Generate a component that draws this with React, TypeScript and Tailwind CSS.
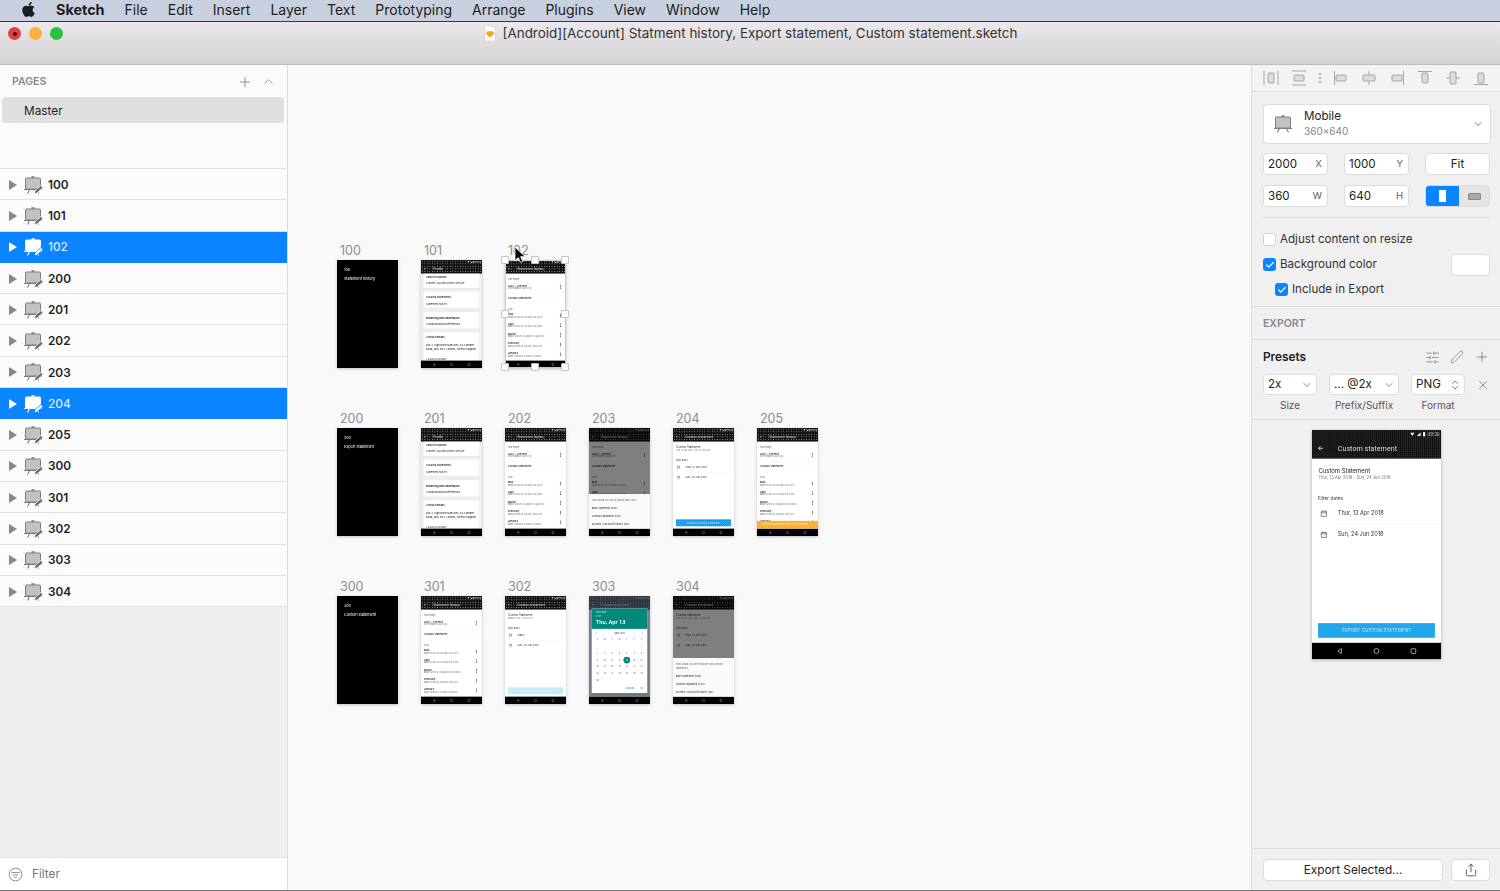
import React from 'react'
import { ChevronDown, ChevronUp, ChevronsUpDown, ChevronLeft, ChevronRight, Check, Pen, Plus, Share, SlidersHorizontal, X } from 'lucide-react'
import { FaApple } from 'react-icons/fa'

const menus = ['File', 'Edit', 'Insert', 'Layer', 'Text', 'Prototyping', 'Arrange', 'Plugins', 'View', 'Window', 'Help']
const pages = ['100', '101', '102', '200', '201', '202', '203', '204', '205', '300', '301', '302', '303', '304']

const Easel = ({ active = false, pencil = true, className = '' }: { active?: boolean; pencil?: boolean; className?: string }) => {
  const line = active ? '#ffffff' : '#7d7d7d'
  return (
    <svg viewBox="0 0 20 18" className={className}>
      <path d="M8.5 1h3" stroke={line} strokeWidth="1.6" />
      <rect x="2.5" y="2" width="15" height="11" rx="1" fill={active ? '#ffffff' : '#c2c2c2'} stroke={line} />
      <path d="M1 13.5h18M6.5 13.5l-2 4M13.5 13.5l2 4" stroke={line} strokeWidth="1.1" fill="none" />
      {pencil && <path d="M11 18l1.2-3.2 5.8-5.3 2 2-5.8 5.3z" fill={active ? '#ffffff' : '#666666'} stroke={active ? '#0a84ff' : '#fbfbfb'} strokeWidth="0.8" />}
    </svg>
  )
}

const Sidebar = () => (
  <aside className="w-[288px] shrink-0 flex flex-col bg-[#efefef] border-r border-[#dcdcdc]">
    <div className="h-[104px] shrink-0 bg-[#fbfbfb] border-b border-[#e2e2e2] flex flex-col px-[2px]">
      <div className="h-[32px] flex items-center justify-between pt-[1px] pl-[10px] pr-[9px]">
        <span className="text-[10.5px] font-semibold text-[#8a8a8a]">PAGES</span>
        <div className="flex items-center gap-[8px] text-[#7c7c7c]">
          <Plus size={16} strokeWidth={1.2} />
          <ChevronUp size={15} strokeWidth={1.2} />
        </div>
      </div>
      <div className="h-[26px] w-[282px] rounded-[4px] bg-[#dfdfdf] flex items-center pl-[22px] pt-[4px] text-[11.8px] text-[#222]">Master</div>
    </div>
    <div className="flex-1 flex flex-col">
      {pages.map(p => {
        const active = p === '102' || p === '204'
        return (
          <div key={p} className={`h-[31.3px] flex items-center pt-[1px] border-b ${active ? 'bg-[#0a84ff] border-[#0a84ff]' : 'border-[#e2e2e2] bg-[#fbfbfb]'}`}>
            <svg viewBox="0 0 8 10" className="w-[8px] h-[10px] ml-[9px]">
              <path d="M0 0l8 5-8 5z" fill={active ? '#ffffff' : '#85898f'} />
            </svg>
            <Easel active={active} className="w-[20px] h-[18px] ml-[6px]" />
            <span className={`ml-[5px] pt-[2px] text-[11.8px] ${active ? 'text-[#dcedff] font-medium' : 'text-[#1e1e1e] font-semibold'}`}>{p}</span>
          </div>
        )
      })}
    </div>
    <div className="h-[33px] shrink-0 bg-white border-t border-[#e2e2e2] flex items-center pl-[8px] gap-[9px]">
      <svg viewBox="0 0 16 16" className="w-[15px] h-[15px]">
        <circle cx="8" cy="8" r="6.8" fill="none" stroke="#8a8a8a" />
        <path d="M3.5 6h9M5 8.5h6M6.5 11h3" stroke="#8a8a8a" />
      </svg>
      <span className="pt-[2px] text-[11.8px] text-[#777]">Filter</span>
    </div>
  </aside>
)

// ---- mini android screens, drawn at 360x640 and scaled down ----

const Dots = ({ fine, children, className = '' }: { fine: boolean; children: React.ReactNode; className?: string }) => (
  <div className={`bg-[#101010] ${fine
    ? 'bg-[radial-gradient(circle,#a4a8ae_1.3px,transparent_1.6px)] bg-[length:5.6px_5.6px]'
    : 'bg-[radial-gradient(circle,#a2a6ad_3.5px,transparent_4px)] bg-[length:15px_15px]'} ${className}`}>{children}</div>
)

const Header = ({ title, fine }: { title: string; fine: boolean }) => (
  <Dots fine={fine} className="h-[80px] shrink-0 flex flex-col border-b-[2px] border-[#5d6b7a]">
    <div className="h-[24px] flex items-center justify-end gap-[6px] pr-[4px] text-white">
      <svg viewBox="0 0 44 14" className="w-[44px] h-[14px]">
        <path d="M1 3h12l-6 8z" fill="#fff" />
        <path d="M20 12l10-10v10z" fill="#fff" />
        <rect x="37" y="1" width="6" height="12" fill="#fff" />
      </svg>
      <span className="text-[12px] text-[#ddd]">09:30</span>
    </div>
    <div className="flex-1 flex items-center pl-[16px] text-[#d8dade]">
      <svg viewBox="0 0 16 16" className="w-[16px] h-[16px]">
        <path d="M15 8H2M8 2L2 8l6 6" stroke="#fff" strokeWidth="2" fill="none" />
      </svg>
      <span className="ml-[40px] text-[20px]" style={{ fontFamily: 'Roboto, sans-serif' }}>{title}</span>
    </div>
  </Dots>
)

const Nav = () => (
  <div className="h-[46px] shrink-0 bg-black flex items-center justify-around px-[26px]">
    <svg viewBox="0 0 20 20" className="w-[20px] h-[20px]"><path d="M15 3L5 10l10 7z" fill="none" stroke="#d8d8d8" strokeWidth="2" /></svg>
    <svg viewBox="0 0 20 20" className="w-[20px] h-[20px]"><circle cx="10" cy="10" r="7" fill="none" stroke="#d8d8d8" strokeWidth="2" /></svg>
    <svg viewBox="0 0 20 20" className="w-[20px] h-[20px]"><rect x="3.5" y="3.5" width="13" height="13" rx="1.5" fill="none" stroke="#d8d8d8" strokeWidth="2" /></svg>
  </div>
)

const Black = ({ num, title }: { num: string; title: string }) => (
  <div className="h-full bg-black text-white pl-[41px] pt-[42px] flex flex-col gap-[22px] text-[22px]">
    <span>{num}</span>
    <span>{title}</span>
  </div>
)

const Kebab = () => (
  <div className="flex flex-col gap-[2px] shrink-0">
    <span className="w-[6px] h-[6px] rounded-full bg-[#333]" />
    <span className="w-[6px] h-[6px] rounded-full bg-[#333]" />
    <span className="w-[6px] h-[6px] rounded-full bg-[#333]" />
  </div>
)

const Month = ({ name, sub }: { name: string; sub: string }) => (
  <div className="h-[57.5px] shrink-0 flex items-center justify-between pl-[16px] pr-[30px]">
    <div className="flex flex-col">
      <span className="text-[16px] leading-[20px] font-medium text-[#111]">{name}</span>
      <span className="text-[11px] leading-[14px] text-[#666]">{sub}</span>
    </div>
    <Kebab />
  </div>
)

const History = ({ fine = false, banner = false }: { fine?: boolean; banner?: boolean }) => (
  <div className="relative h-full flex flex-col bg-white">
    <Header title="Statement history" fine={fine} />
    <div className="flex-1 overflow-hidden flex flex-col">
      <div className="pl-[16px] pt-[24px] text-[13px] leading-[18px] text-[#555]">This month</div>
      <div className="h-[78px] shrink-0 flex items-center justify-between pl-[16px] pr-[30px] border-b border-[#e8e8e8] -mt-[2px]">
        <div className="flex flex-col">
          <span className="text-[16px] leading-[20px] font-medium text-[#111]">Jun 1 - Present</span>
          <span className="text-[11px] leading-[14px] text-[#666]">Current balance: £3412.50</span>
        </div>
        <Kebab />
      </div>
      <div className="h-[54px] shrink-0 flex items-center pl-[16px] text-[16px] font-medium text-[#111] border-b border-[#e8e8e8]">Custom statement</div>
      <div className="pl-[16px] pt-[28px] text-[13px] leading-[18px] text-[#555]">2018</div>
      <Month name="May" sub="Balance £1482.50, in £3800, out £2320" />
      <Month name="April" sub="Balance £1002.50, in £3800, out £2150" />
      <Month name="March" sub="Balance £952.50, in £3800, out £3040.50" />
      <Month name="February" sub="Balance £1193.00, in £3800, out £2770" />
      <Month name="January" sub="Balance £963.00, in £3800, out £4010" />
    </div>
    {banner && (
      <div className="absolute left-0 right-0 bottom-[46px] h-[46px] bg-[#f9b13c] flex items-center pl-[24px] text-[13px] text-[#fdebc8]">
        Your file download will start in a few seconds
      </div>
    )}
    <Nav />
  </div>
)

const ProfileCard = ({ children }: { children: React.ReactNode }) => (
  <div className="mx-[14px] bg-white rounded-[2px] shadow-[0_1px_3px_#bbb] px-[16px] text-[15px] text-[#111] shrink-0">{children}</div>
)

const Profile = () => (
  <div className="h-full flex flex-col bg-[#eeeeee]">
    <Header title="Profile" fine={false} />
    <div className="flex-1 overflow-hidden flex flex-col gap-[20px]">
      <ProfileCard>
        <div className="h-[42px] flex items-center font-semibold">Switch to Monzo</div>
        <div className="h-[46px] flex items-start pt-[6px]">Current Account Switch Service</div>
      </ProfileCard>
      <ProfileCard>
        <div className="h-[50px] flex items-end pb-[5px] font-semibold">Account statements</div>
        <div className="h-[49px] flex items-start pt-[9px]">Statement history</div>
      </ProfileCard>
      <ProfileCard>
        <div className="h-[50px] flex items-end pb-[5px] font-semibold">Marketing and marketplace</div>
        <div className="h-[49px] flex items-start pt-[9px]">Communication preferences</div>
      </ProfileCard>
      <ProfileCard>
        <div className="h-[45px] flex items-end pb-[5px] font-semibold">Contact details</div>
        <div className="pt-[16px] pb-[14px] leading-[28px] border-b border-[#e8e8e8]">Flat 4, Highstone Mansions, 84 Camden Road, NW1 9DY, London, United Kingdom</div>
        <div className="h-[60px] pt-[18px]">+442072234567</div>
      </ProfileCard>
    </div>
    <Nav />
  </div>
)

const DateIcon = () => (
  <svg viewBox="0 0 20 20" className="w-[20px] h-[20px] shrink-0">
    <rect x="2.5" y="4" width="15" height="14" rx="1" fill="none" stroke="#555" strokeWidth="2" />
    <path d="M2.5 8h15M6 1.5V4M14 1.5V4" stroke="#555" strokeWidth="2" />
  </svg>
)

const CustomBody = ({ first, sub }: { first: string; sub: string }) => (
  <div className="flex-1 overflow-hidden flex flex-col">
    <div className="pl-[18px] pt-[22px] text-[16.5px] leading-[22px] text-[#222]">Custom Statement</div>
    <div className="pl-[18px] text-[11.5px] leading-[16px] text-[#777]">{sub}</div>
    <div className="pl-[16px] pt-[40px] text-[13.5px] leading-[18px] text-[#444]">Filter dates</div>
    <div className="h-[58px] mt-[6px] flex items-center pl-[23px] gap-[29px] text-[15.5px] text-[#333]">
      <DateIcon /><span>{first}</span>
    </div>
    <div className="ml-[72px] border-b border-[#e8e8e8]" />
    <div className="h-[58px] flex items-center pl-[23px] gap-[29px] text-[15.5px] text-[#333]">
      <DateIcon /><span>Sun, 24 Jun 2018</span>
    </div>
  </div>
)

const Custom = ({ fine = false, first = 'Thur, 13 Apr 2018', pale = false, sub = 'Thur, 13 Apr 2018 - Sun, 24 Jun 2018' }: { fine?: boolean; first?: string; pale?: boolean; sub?: string }) => (
  <div className="h-full flex flex-col bg-white">
    <Header title="Custom statement" fine={fine} />
    <CustomBody first={first} sub={sub} />
    <div className="px-[17px] pb-[14px] shrink-0">
      {pale ? (
        <div className="h-[41px] bg-[#c5ecf7] flex items-center justify-center text-[13px] text-[#eaf8fc]">EXPORT CUSTOM STATEMENT</div>
      ) : (
        <div className={`h-[41px] bg-[#22a6ec] flex items-center justify-center text-[13px] text-[#bfe6fa] ${fine
          ? 'bg-[radial-gradient(circle,#0a74d8_1.1px,transparent_1.4px)] bg-[length:4px_4px]'
          : 'bg-[radial-gradient(circle,#0a6fd0_3px,transparent_3.5px)] bg-[length:12px_12px]'}`}>EXPORT CUSTOM STATEMENT</div>
      )}
    </div>
    <Nav />
  </div>
)

const Scrim = ({ top, children }: { top: string; children: React.ReactNode }) => (
  <div className="absolute inset-x-0 top-0 bottom-[46px] flex flex-col">
    <div className={`${top} shrink-0 bg-black/50`} />
    <div className="flex-1 bg-[#fafafa] flex flex-col text-[#222]">{children}</div>
  </div>
)

const Sheet = ({ question }: { question: string }) => (
  <div className="px-[16px] flex flex-col h-full">
    <div className="text-[14px] leading-[24px] pt-[24px] text-[#666]">{question}</div>
    <div className="text-[14.5px] leading-[48px] mt-[10px]">Bank Statement (PDF)</div>
    <div className="text-[14.5px] leading-[48px]">Comma Separated (CSV)</div>
    <div className="text-[14.5px] leading-[48px]">Quicken / Microsoft Money (QIF)</div>
  </div>
)

const april = [
  ['', '', '', '', '', '', '1'],
  ['2', '3', '4', '5', '6', '7', '8'],
  ['9', '10', '11', '12', '13', '14', '15'],
  ['16', '17', '18', '19', '20', '21', '22'],
  ['23', '24', '25', '26', '27', '28', '29'],
  ['30', '', '', '', '', '', ''],
]

const Picker = () => (
  <div className="relative h-full">
    <Custom first="Thur, 13 Apr 2018" />
    <div className="absolute inset-x-0 top-0 bottom-[46px] bg-[#3c4650]/70 flex items-start justify-center pt-[74px]">
      <div className="w-[328px] h-[500px] bg-white flex flex-col">
        <div className="h-[120px] shrink-0 bg-[#00897b] pl-[24px] pt-[14px] flex flex-col text-[#b8e0da]">
          <span className="text-[14px] leading-[20px]">Start date</span>
          <span className="text-[14px] leading-[24px]">2017</span>
          <span className="text-[34px] leading-[44px] text-white font-medium" style={{ fontFamily: 'Roboto, sans-serif' }}>Thu, Apr 13</span>
        </div>
        <div className="h-[40px] mt-[4px] flex items-center justify-between px-[20px] text-[13px] text-[#222]">
          <ChevronLeft size={16} /><span>April 2017</span><ChevronRight size={16} />
        </div>
        <div className="grid grid-cols-7 px-[12px] text-[12px] text-[#555]">
          {['S', 'M', 'T', 'W', 'T', 'F', 'S'].map((d, i) => (
            <span key={i} className="h-[40px] flex items-center justify-center">{d}</span>
          ))}
          {april.flat().map((d, i) => (
            <span key={i} className="h-[40px] flex items-center justify-center">
              {d === '13' ? <span className="w-[40px] h-[40px] rounded-full bg-[#00897b] flex items-center justify-center text-white">{d}</span> : d}
            </span>
          ))}
        </div>
        <div className="flex-1 flex items-center justify-end gap-[34px] pr-[24px] text-[12.5px] font-medium text-[#00a896]">
          <span>CANCEL</span><span>OK</span>
        </div>
      </div>
    </div>
  </div>
)

const ExportMay = () => (
  <div className="relative h-full">
    <History />
    <Scrim top="h-[390px]">
      <Sheet question="How would you like to export May 2018?" />
    </Scrim>
  </div>
)

const ExportCustom = () => (
  <div className="relative h-full">
    <Custom />
    <Scrim top="h-[366px]">
      <Sheet question="How would you like to export your custom statement?" />
    </Scrim>
  </div>
)

const Board = ({ label, children, selected = false }: { label: string; children: React.ReactNode; selected?: boolean }) => (
  <div className="w-[61px] shrink-0">
    <div className="h-[17px] pl-[3px] text-[12.5px] leading-[15px] text-[#8c8c8c]">{label}</div>
    <div className="relative w-[61px] h-[108px] shadow-[0_1px_3px_rgba(0,0,0,0.22)]">
      <div className="w-full h-full overflow-hidden blur-[0.35px]">
        <div className="w-[360px] h-[640px] origin-top-left scale-[0.1694]">{children}</div>
      </div>
      {selected && <Handles />}
    </div>
  </div>
)

const handleSpots = [
  'left-[-4px] top-[-4px]', 'left-[26px] top-[-4px]', 'left-[56px] top-[-4px]',
  'left-[-4px] top-[50px]', 'left-[56px] top-[50px]',
  'left-[-4px] top-[103px]', 'left-[26px] top-[103px]', 'left-[56px] top-[103px]',
]

const Handles = () => (
  <>
    <div className="absolute inset-0 border border-[#c9c9c9]" />
    {handleSpots.map(s => (
      <div key={s} className={`absolute w-[8px] h-[8px] bg-white border border-[#c4c4c4] rounded-[1px] ${s}`} />
    ))}
    <svg viewBox="0 0 12 18" className="absolute left-[9px] top-[-14px] w-[12px] h-[18px]">
      <path d="M1 1v13.5l3.3-3 2.2 5 2.3-1-2.2-4.8h4.6z" fill="#000" stroke="#fff" strokeWidth="0.8" />
    </svg>
  </>
)

const Canvas = () => (
  <main className="flex-1 bg-[#f9f9f9] pl-[49px] pt-[178px] flex flex-col gap-[43px] overflow-hidden">
    <div className="flex gap-[23px]">
      <Board label="100"><Black num="100" title="Statement history" /></Board>
      <Board label="101"><Profile /></Board>
      <Board label="102" selected><History /></Board>
    </div>
    <div className="flex gap-[23px]">
      <Board label="200"><Black num="200" title="Export statement" /></Board>
      <Board label="201"><Profile /></Board>
      <Board label="202"><History /></Board>
      <Board label="203"><ExportMay /></Board>
      <Board label="204"><Custom /></Board>
      <Board label="205"><History banner /></Board>
    </div>
    <div className="flex gap-[23px]">
      <Board label="300"><Black num="300" title="Custom statement" /></Board>
      <Board label="301"><History /></Board>
      <Board label="302"><Custom first="Starts" pale sub="Balance: Sun, 24 Jun 2018" /></Board>
      <Board label="303"><Picker /></Board>
      <Board label="304"><ExportCustom /></Board>
    </div>
  </main>
)

// ---- inspector ----

const alignIcons = [
  { line: 'M1 1v14M15 1v14', box: [5, 3, 6, 10] },
  { line: 'M1 1h14M1 15h14', box: [3, 5, 10, 6] },
  null,
  { line: 'M1.5 1v14', box: [3, 5, 10, 6] },
  { line: 'M8 1v14', box: [2, 5, 12, 6] },
  { line: 'M14.5 1v14', box: [3, 5, 10, 6] },
  { line: 'M1 1.5h14', box: [5, 3, 6, 10] },
  { line: 'M1 8h14', box: [5, 2, 6, 12] },
  { line: 'M1 14.5h14', box: [5, 3, 6, 10] },
]

const AlignRow = () => (
  <div className="h-[27px] shrink-0 border-b border-[#dedede] bg-[#f3f3f3] flex items-center pl-[11px] gap-[12px]">
    {alignIcons.map((a, i) => a ? (
      <svg key={i} viewBox="0 0 16 16" className="w-[16px] h-[16px]">
        <path d={a.line} stroke="#a6a6a6" fill="none" />
        <rect x={a.box[0]} y={a.box[1]} width={a.box[2]} height={a.box[3]} rx="1" fill="#dcdcdc" stroke="#a6a6a6" />
      </svg>
    ) : (
      <div key={i} className="w-[2px] flex flex-col gap-[2px]">
        <span className="w-[2px] h-[2px] bg-[#a6a6a6]" />
        <span className="w-[2px] h-[2px] bg-[#a6a6a6]" />
        <span className="w-[2px] h-[2px] bg-[#a6a6a6]" />
      </div>
    ))}
  </div>
)

const Field = ({ value, unit }: { value: string; unit: string }) => (
  <div className="w-[65px] h-[22px] bg-white border border-[#dcdcdc] rounded-[4px] flex items-center justify-between pl-[4px] pr-[5px] pt-[1px] text-[11.6px] text-[#222]">
    <span>{value}</span><span className="text-[9.5px] font-medium text-[#777]">{unit}</span>
  </div>
)

const Tick = ({ on, label }: { on: boolean; label: string }) => (
  <div className="flex items-center gap-[4px] text-[11.6px] leading-[13px] text-[#333]">
    <span className={`w-[13px] h-[13px] rounded-[3px] flex items-center justify-center ${on ? 'bg-[#0a84ff]' : 'bg-white border border-[#d2d2d2]'}`}>
      {on && <Check size={10} strokeWidth={3} className="text-white" />}
    </span>
    {label}
  </div>
)

const Select = ({ value, width, updown = false }: { value: string; width: string; updown?: boolean }) => (
  <div className={`${width} h-[21px] shrink-0 bg-white border border-[#dcdcdc] rounded-[4px] flex items-center justify-between pl-[4px] pr-[3px] text-[11.6px] text-[#222]`}>
    <span>{value}</span>
    {updown ? <ChevronsUpDown size={12} className="text-[#888]" /> : <ChevronDown size={12} className="text-[#888]" />}
  </div>
)

const Inspector = () => (
  <aside className="w-[249px] shrink-0 bg-[#f0f0f0] border-l border-[#dcdcdc] flex flex-col">
    <AlignRow />
    <div className="h-[125px] shrink-0 pl-[11px] pt-[12px]">
      <div className="h-[40px] w-[228px] bg-white border border-[#dcdcdc] rounded-[4px] flex items-center pl-[9px] pr-[6px]">
        <Easel pencil={false} className="w-[20px] h-[18px] shrink-0" />
        <div className="ml-[11px] flex-1 flex flex-col">
          <span className="text-[11.6px] leading-[15px] text-[#222]">Mobile</span>
          <span className="text-[10px] leading-[15px] text-[#888]">360×640</span>
        </div>
        <ChevronDown size={12} className="text-[#777]" />
      </div>
      <div className="mt-[9px] flex gap-[16px]">
        <Field value="2000" unit="X" />
        <Field value="1000" unit="Y" />
        <div className="w-[65px] h-[22px] bg-white border border-[#dcdcdc] rounded-[4px] flex items-center justify-center pt-[1px] text-[11.6px] text-[#222]">Fit</div>
      </div>
      <div className="mt-[10px] flex gap-[16px]">
        <Field value="360" unit="W" />
        <Field value="640" unit="H" />
        <div className="w-[65px] h-[22px] rounded-[4px] border border-[#dcdcdc] overflow-hidden flex">
          <div className="w-[33px] bg-[#0a84ff] flex items-center justify-center"><span className="w-[7px] h-[12px] bg-white" /></div>
          <div className="flex-1 bg-[#e4e4e4] flex items-center justify-center"><span className="w-[13px] h-[7px] bg-[#a8a8a8] border border-[#888] rounded-[1px]" /></div>
        </div>
      </div>
    </div>
    <div className="h-[89px] shrink-0 ml-[11px] mr-[10px] border-t border-[#dedede] flex flex-col pt-[15px] gap-[12px]">
      <Tick on={false} label="Adjust content on resize" />
      <div className="flex items-center justify-between h-[13px]">
        <Tick on label="Background color" />
        <span className="w-[39px] h-[22px] bg-white border border-[#dcdcdc] rounded-[4px]" />
      </div>
      <div className="pl-[12px]"><Tick on label="Include in Export" /></div>
    </div>
    <div className="h-[33px] shrink-0 border-t border-[#dedede] pl-[11px] pt-[2px] flex items-center text-[10.5px] font-semibold text-[#888]">EXPORT</div>
    <div className="h-[81px] shrink-0 border-t border-b border-[#dedede] pl-[11px] pr-[10px] flex flex-col">
      <div className="h-[34px] flex items-center justify-between">
        <span className="pt-[2px] text-[11.8px] font-semibold text-[#222]">Presets</span>
        <div className="flex items-center gap-[10px] text-[#777]">
          <SlidersHorizontal size={15} strokeWidth={1.2} />
          <Pen size={14} strokeWidth={1.2} />
          <Plus size={16} strokeWidth={1.2} />
        </div>
      </div>
      <div className="flex gap-[12px] items-center">
        <Select value="2x" width="w-[54px]" />
        <Select value="... @2x" width="w-[70px]" />
        <Select value="PNG" width="w-[54px]" updown />
        <X size={14} strokeWidth={1.3} className="text-[#777] -ml-[1px]" />
      </div>
      <div className="flex gap-[12px] mt-[3px] text-[10px] text-[#555] text-center">
        <span className="w-[54px]">Size</span>
        <span className="w-[70px]">Prefix/Suffix</span>
        <span className="w-[54px]">Format</span>
      </div>
    </div>
    <div className="flex-1 flex justify-center pt-[10px]">
      <div className="w-[129px] h-[229px] shadow-[0_1px_3px_rgba(0,0,0,0.3)] overflow-hidden">
        <div className="w-full h-full blur-[0.4px]">
          <div className="w-[360px] h-[640px] origin-top-left scale-[0.3583]"><Custom fine /></div>
        </div>
      </div>
    </div>
    <div className="h-[42px] shrink-0 border-t border-[#dedede] pl-[11px] flex items-start pt-[10px] gap-[8px]">
      <div className="w-[180px] h-[22px] bg-white border border-[#dcdcdc] rounded-[4px] flex items-center justify-center pt-[2px] text-[11.8px] text-[#222]">Export Selected...</div>
      <div className="w-[39px] h-[22px] bg-white border border-[#dcdcdc] rounded-[4px] flex items-center justify-center text-[#333]"><Share size={14} strokeWidth={1.3} /></div>
    </div>
  </aside>
)

const App = () => {
  return (
    <div className="w-[1500px] h-[891px] overflow-hidden flex flex-col" style={{ fontFamily: 'Inter, sans-serif' }}>
      <div className="h-[21px] shrink-0 bg-[#c8d0df] flex items-center pb-[2px] text-[14px] text-[#1c1c1c]">
        <FaApple size={17} className="ml-[20px]" />
        <span className="ml-[19px] font-bold text-[14.4px]">Sketch</span>
        <div className="ml-[20px] flex gap-[20px]">
          {menus.map(m => <span key={m}>{m}</span>)}
        </div>
      </div>
      <div className="h-[44px] shrink-0 border-t border-[#3a3a3a] bg-gradient-to-b from-[#ebe8eb] to-[#d4d1d4] border-b-[#bdbdbd] border-b flex items-start relative">
        <div className="flex items-center gap-[8px] pl-[8px] pt-[5px]">
          <span className="w-[13px] h-[13px] rounded-full bg-[#e2403c] flex items-center justify-center"><span className="w-[4px] h-[4px] rounded-full bg-[#3a0a0a]" /></span>
          <span className="w-[13px] h-[13px] rounded-full bg-[#fbb13c]" />
          <span className="w-[13px] h-[13px] rounded-full bg-[#2ac33f]" />
        </div>
        <div className="absolute left-0 right-0 top-[1px] flex justify-center items-center gap-[6px] text-[13.45px] text-[#333]">
          <svg viewBox="0 0 12 14" className="w-[14px] h-[15px]">
            <path d="M1 0h7l3 3v11H1z" fill="#fff" stroke="#ccc" strokeWidth="0.6" />
            <path d="M3.5 5h5l1.5 2-4 4-4-4z" fill="#f6a623" />
          </svg>
          <span>[Android][Account] Statment history, Export statement, Custom statement.sketch</span>
        </div>
      </div>
      <div className="flex-1 flex min-h-0">
        <Sidebar />
        <Canvas />
        <Inspector />
      </div>
      <div className="h-[1px] shrink-0 bg-[#777]" />
    </div>
  )
}

export default App
